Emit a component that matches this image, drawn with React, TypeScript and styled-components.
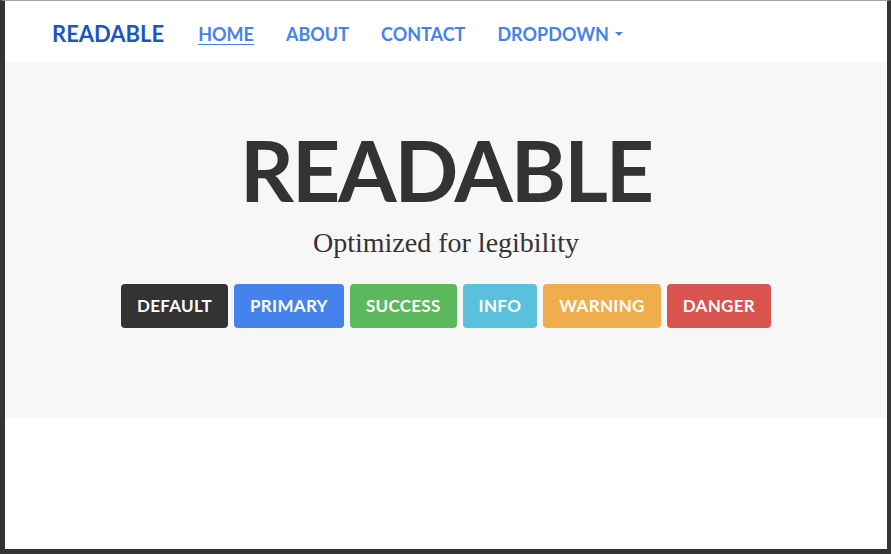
import React from "react";
import styled, { createGlobalStyle } from "styled-components";

const GlobalStyle = createGlobalStyle`
  html, body {
    margin: 0;
    padding: 0;
    background: #ffffff;
  }
  * {
    box-sizing: border-box;
  }
`;

const Frame = styled.div`
  width: 891px;
  height: 554px;
  border-top: 1px solid #a3a3a3;
  border-left: 5px solid #343434;
  border-right: 4px solid #343434;
  border-bottom: 5px solid #343434;
  background: #fff;
  display: flex;
  flex-direction: column;
  overflow: hidden;
`;

const Navbar = styled.nav`
  height: 61px;
  display: flex;
  align-items: center;
  padding: 4px 0 0 47px;
  font-family: Lato, "Open Sans", sans-serif;
  font-weight: 700;
  text-transform: uppercase;
`;

const Brand = styled.a`
  font-size: 22px;
  color: #1d55c4;
  text-decoration: none;
  margin-right: 34px;
`;

const NavList = styled.ul`
  list-style: none;
  display: flex;
  gap: 32px;
  margin: 0;
  padding: 0;
`;

const NavLink = styled.a<{ $active?: boolean }>`
  font-size: 18px;
  color: #4582ec;
  text-decoration: ${(p) => (p.$active ? "underline" : "none")};
  text-underline-offset: 3px;
  text-decoration-thickness: 1px;
  display: flex;
  align-items: center;
  gap: 6px;
`;

const Caret = styled.span`
  width: 0;
  height: 0;
  border-left: 4px solid transparent;
  border-right: 4px solid transparent;
  border-top: 4px solid #4582ec;
`;

const Jumbotron = styled.section`
  height: 356px;
  background: #f7f7f7;
  display: flex;
  flex-direction: column;
  align-items: center;
  padding-top: 62px;
`;

const Title = styled.h1`
  margin: 0;
  font-family: Lato, "Open Sans", sans-serif;
  font-weight: 700;
  font-size: 84px;
  letter-spacing: -2px;
  line-height: 1.1;
  text-transform: uppercase;
  color: #333333;
`;

const Lead = styled.p`
  margin: 10px 0 0;
  font-family: "Liberation Serif", serif;
  font-size: 28px;
  line-height: 1.2;
  color: #333333;
`;

const ButtonRow = styled.div`
  display: flex;
  gap: 6px;
  margin-top: 24px;
`;

const Button = styled.button<{ $bg: string }>`
  height: 44px;
  padding: 0 16px;
  border: none;
  border-radius: 4px;
  background: ${(p) => p.$bg};
  color: #fff;
  font-family: Lato, "Open Sans", sans-serif;
  font-weight: 700;
  font-size: 17px;
  letter-spacing: 0.3px;
  text-transform: uppercase;
  cursor: pointer;
`;

const buttons = [
  { label: "Default", bg: "#333333" },
  { label: "Primary", bg: "#4582ec" },
  { label: "Success", bg: "#5cb85c" },
  { label: "Info", bg: "#5bc0de" },
  { label: "Warning", bg: "#f0ad4e" },
  { label: "Danger", bg: "#d9534f" },
];

export default function App() {
  return (
    <>
      <GlobalStyle />
      <Frame>
        <Navbar>
          <Brand href="#">Readable</Brand>
          <NavList>
            <li><NavLink href="#" $active>Home</NavLink></li>
            <li><NavLink href="#">About</NavLink></li>
            <li><NavLink href="#">Contact</NavLink></li>
            <li><NavLink href="#">Dropdown <Caret /></NavLink></li>
          </NavList>
        </Navbar>
        <Jumbotron>
          <Title>Readable</Title>
          <Lead>Optimized for legibility</Lead>
          <ButtonRow>
            {buttons.map((b) => (
              <Button key={b.label} $bg={b.bg}>{b.label}</Button>
            ))}
          </ButtonRow>
        </Jumbotron>
      </Frame>
    </>
  );
}
